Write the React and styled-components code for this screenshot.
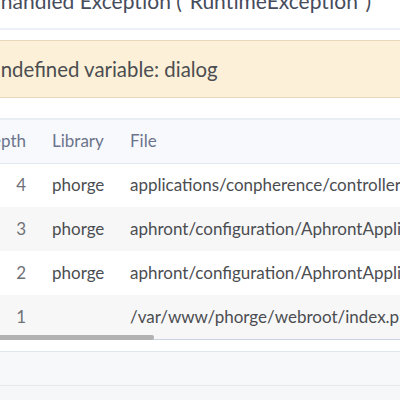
import React from 'react';
import styled, { createGlobalStyle } from 'styled-components';

const Global = createGlobalStyle`
  html, body { margin: 0; padding: 0; overflow: hidden; background: #f6f7f9; }
  body { font-family: Lato, "Liberation Sans", sans-serif; }
`;

const Dialog = styled.div`
  width: 480px;
  margin-left: -35px;
  background: #fff;
`;

const Head = styled.div`
  margin-top: -12px;
  padding: 0 14px 15px 9px;
  font-size: 21px;
  line-height: 25px;
  color: #464c5c;
  white-space: nowrap;
  border-bottom: 2px solid #edf0f6;
`;

const Body = styled.div`
  padding: 10px 12px 11px;
`;

const Warning = styled.div`
  border: 1px solid #e6d8b8;
  background: #fcf1d8;
  padding: 16px 10px 16px 8px;
  font-size: 20.4px;
  line-height: 24px;
  color: #4b4d51;
  white-space: nowrap;
`;

const TableFrame = styled.div`
  position: relative;
  margin-top: 20px;
  border-top: 2px solid #e9eef5;
  border-bottom: 1px solid #cbd3e3;
`;

const Scroller = styled.div`
  overflow: hidden;
`;

const ScrollThumb = styled.div`
  position: absolute;
  left: 0;
  bottom: -1px;
  width: 177px;
  height: 5px;
  background: #b2b2b2;
  border-radius: 0 2px 2px 0;
`;

const Table = styled.table`
  width: 1175px;
  table-layout: fixed;
  border-collapse: collapse;
  font-size: 17px;
  line-height: 20px;
`;

const HeadRow = styled.tr`
  height: 43px;
  background: #f8f9fc;
  border-bottom: 1px solid #e3e9f1;
`;

const Row = styled.tr`
  height: 44px;
  background: ${p => (p.$alt ? '#f7f7f7' : '#fff')};
`;

const Th = styled.th`
  padding: ${p => (p.$num ? '0 14px 0 0' : '0 12px')};
  font-weight: normal;
  color: #6b748c;
  text-align: ${p => (p.$num ? 'right' : 'left')};
  width: ${p => p.$w || 'auto'};
  box-sizing: border-box;
  white-space: nowrap;
`;

const Td = styled.td`
  padding: ${p => (p.$num ? '0 14px 0 0' : '0 12px')};
  color: ${p => (p.$num ? '#6f7178' : '#4b4d51')};
  text-align: ${p => (p.$num ? 'right' : 'left')};
  white-space: nowrap;
  overflow: hidden;
`;

const Footer = styled.div`
  height: 33px;
  background: #f7f8fa;
  border-top: 1px solid #e1e6ee;
  border-bottom: 1px solid #e4e7ec;
`;

const rows = [
  { depth: 4, lib: 'phorge', file: 'applications/conpherence/controller/ConpherenceUpdateController.php : 392' },
  { depth: 3, lib: 'phorge', file: 'aphront/configuration/AphrontApplicationConfiguration.php : 733' },
  { depth: 2, lib: 'phorge', file: 'aphront/configuration/AphrontApplicationConfiguration.php : 284' },
  { depth: 1, lib: '', file: '/var/www/phorge/webroot/index.php : 35' },
];

export default function App() {
  return (
    <>
      <Global />
      <Dialog>
        <Head>Unhandled Exception ("RuntimeException")</Head>
        <Body>
          <Warning>Undefined variable: dialog</Warning>
          <TableFrame>
            <Scroller>
              <Table>
                <thead>
                  <HeadRow>
                    <Th $num $w="63px">Depth</Th>
                    <Th $w="78px">Library</Th>
                    <Th>File</Th>
                  </HeadRow>
                </thead>
                <tbody>
                  {rows.map((r, i) => (
                    <Row key={r.depth} $alt={i % 2 === 1}>
                      <Td $num>{r.depth}</Td>
                      <Td>{r.lib}</Td>
                      <Td>{r.file}</Td>
                    </Row>
                  ))}
                </tbody>
              </Table>
            </Scroller>
            <ScrollThumb />
          </TableFrame>
        </Body>
        <Footer />
      </Dialog>
    </>
  );
}
